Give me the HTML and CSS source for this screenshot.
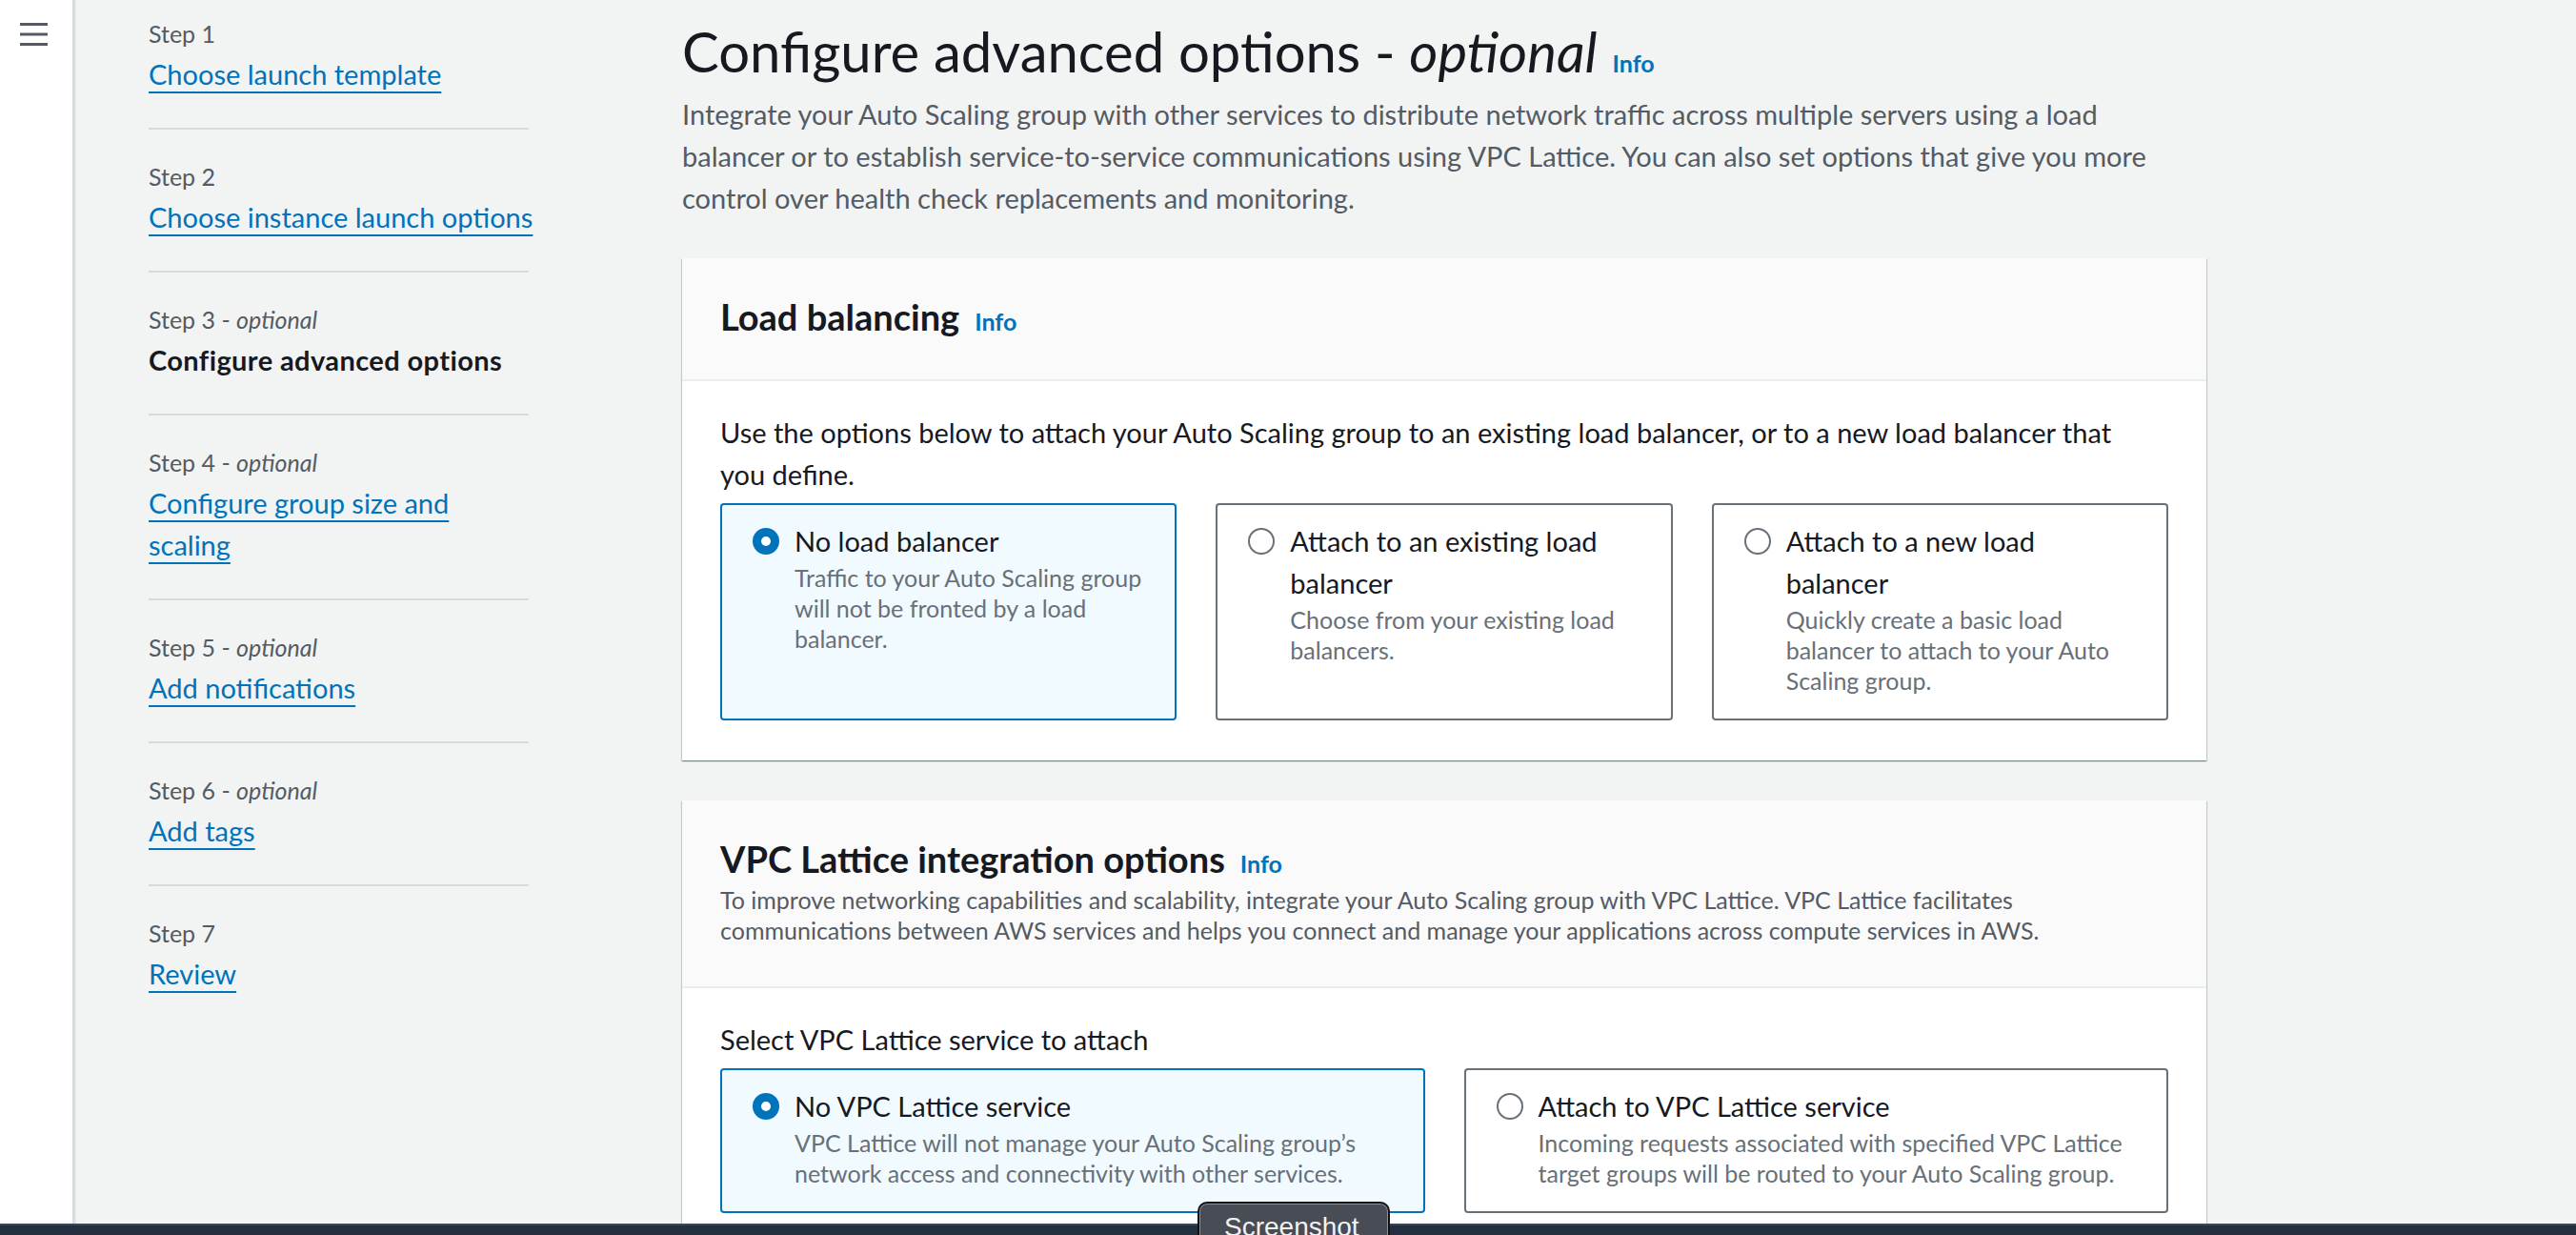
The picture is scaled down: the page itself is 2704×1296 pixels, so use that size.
FILE: index.html
```html
<!DOCTYPE html>
<html lang="en">
<head>
<meta charset="utf-8">
<title>Configure advanced options</title>
<link rel="stylesheet" href="styles.css">
</head>
<body>
<div class="app">
  <aside class="rail">
    <button class="menu-btn" aria-label="Open navigation">
      <svg width="30" height="26" viewBox="0 0 30 26" aria-hidden="true">
        <rect x="0" y="2" width="29" height="3"></rect>
        <rect x="0" y="12.5" width="29" height="3"></rect>
        <rect x="0" y="23" width="29" height="3"></rect>
      </svg>
    </button>
  </aside>

  <nav class="steps">
    <ol>
      <li class="step"><span class="step-label">Step 1</span><a class="step-link" href="#">Choose launch template</a></li>
      <li class="step"><span class="step-label">Step 2</span><a class="step-link" href="#">Choose instance launch options</a></li>
      <li class="step"><span class="step-label">Step 3 - <i>optional</i></span><span class="step-current">Configure advanced options</span></li>
      <li class="step"><span class="step-label">Step 4 - <i>optional</i></span><a class="step-link" href="#">Configure group size and<br>scaling</a></li>
      <li class="step"><span class="step-label">Step 5 - <i>optional</i></span><a class="step-link" href="#">Add notifications</a></li>
      <li class="step"><span class="step-label">Step 6 - <i>optional</i></span><a class="step-link" href="#">Add tags</a></li>
      <li class="step"><span class="step-label">Step 7</span><a class="step-link" href="#">Review</a></li>
    </ol>
  </nav>

  <main class="main">
    <header class="page-header">
      <h1>Configure advanced options - <i>optional</i><a class="info info-h1" href="#">Info</a></h1>
      <p class="page-desc">Integrate your Auto Scaling group with other services to distribute network traffic across multiple servers using a load<br>balancer or to establish service-to-service communications using VPC Lattice. You can also set options that give you more<br>control over health check replacements and monitoring.</p>
    </header>

    <section class="container">
      <div class="container-header">
        <h2>Load balancing<a class="info" href="#">Info</a></h2>
      </div>
      <div class="container-body">
        <p class="field-label">Use the options below to attach your Auto Scaling group to an existing load balancer, or to a new load balancer that<br>you define.</p>
        <div class="tiles tiles-3">
          <div class="tile selected">
            <span class="radio checked"></span>
            <span class="tile-text">
              <span class="tile-label">No load balancer</span>
              <span class="tile-desc">Traffic to your Auto Scaling group<br>will not be fronted by a load<br>balancer.</span>
            </span>
          </div>
          <div class="tile">
            <span class="radio"></span>
            <span class="tile-text">
              <span class="tile-label">Attach to an existing load<br>balancer</span>
              <span class="tile-desc">Choose from your existing load<br>balancers.</span>
            </span>
          </div>
          <div class="tile">
            <span class="radio"></span>
            <span class="tile-text">
              <span class="tile-label">Attach to a new load<br>balancer</span>
              <span class="tile-desc">Quickly create a basic load<br>balancer to attach to your Auto<br>Scaling group.</span>
            </span>
          </div>
        </div>
      </div>
    </section>

    <section class="container container-second">
      <div class="container-header">
        <h2>VPC Lattice integration options<a class="info" href="#">Info</a></h2>
        <p class="container-desc">To improve networking capabilities and scalability, integrate your Auto Scaling group with VPC Lattice. VPC Lattice facilitates<br>communications between AWS services and helps you connect and manage your applications across compute services in AWS.</p>
      </div>
      <div class="container-body">
        <p class="field-label">Select VPC Lattice service to attach</p>
        <div class="tiles tiles-2">
          <div class="tile selected">
            <span class="radio checked"></span>
            <span class="tile-text">
              <span class="tile-label">No VPC Lattice service</span>
              <span class="tile-desc">VPC Lattice will not manage your Auto Scaling group’s<br>network access and connectivity with other services.</span>
            </span>
          </div>
          <div class="tile">
            <span class="radio"></span>
            <span class="tile-text">
              <span class="tile-label">Attach to VPC Lattice service</span>
              <span class="tile-desc">Incoming requests associated with specified VPC Lattice<br>target groups will be routed to your Auto Scaling group.</span>
            </span>
          </div>
        </div>
      </div>
    </section>
  </main>
</div>

<div class="footer-bar"></div>
<div class="shot-tab">Screenshot</div>
</body>
</html>
```

FILE: styles.css
```css
* { box-sizing: border-box; }

html, body {
  margin: 0;
  height: 100%;
}

body {
  background: #f2f3f3;
  font-family: Lato, "Open Sans", sans-serif;
  color: #16191f;
  overflow: hidden;
}

.app {
  display: flex;
  align-items: flex-start;
  height: 1296px;
}

/* left rail */
.rail {
  flex: none;
  width: 78px;
  align-self: stretch;
  background: #ffffff;
  border-right: 2px solid #d5dbdb;
  box-shadow: 1px 0 2px rgba(0, 28, 36, 0.12);
  padding: 22px 0 0 21px;
}

.menu-btn {
  display: block;
  border: 0;
  background: none;
  padding: 0;
  width: 30px;
  height: 26px;
  fill: #545b64;
}

/* wizard steps */
.steps {
  flex: none;
  width: 399px;
  margin-left: 78px;
  padding-top: 19px;
}

.steps ol {
  list-style: none;
  margin: 0;
  padding: 0;
}

.step {
  padding-bottom: 34px;
  margin-bottom: 33px;
  border-bottom: 2px solid #d5dbdb;
}

.step:last-child {
  border-bottom: 0;
}

.step-label {
  display: block;
  font-size: 25px;
  line-height: 32px;
  color: #545b64;
  margin-bottom: 5px;
}

.step-link,
.step-current {
  font-size: 29px;
  line-height: 44px;
  white-space: nowrap;
}

.step-link {
  color: #0073bb;
  text-decoration: underline;
  text-decoration-thickness: 2px;
  text-underline-offset: 7px;
}

.step-current {
  display: block;
  font-weight: 700;
  letter-spacing: 0.4px;
  color: #16191f;
}

/* main column */
.main {
  flex: none;
  width: 1600px;
  margin-left: 161px;
}

h1 {
  margin: 0;
  padding-top: 18px;
  font-size: 58px;
  line-height: 72px;
  font-weight: 400;
  color: #16191f;
}

.info {
  font-size: 25px;
  line-height: 1;
  font-weight: 700;
  color: #0073bb;
  text-decoration: none;
  margin-left: 16px;
}

.page-desc {
  margin: 8px 0 0;
  font-size: 29px;
  line-height: 44px;
  color: #545b64;
}

.container {
  margin-top: 41px;
  background: #ffffff;
  box-shadow: 0 1px 1px 0 rgba(0, 28, 36, 0.3),
              1px 1px 1px 0 rgba(0, 28, 36, 0.15),
              -1px 1px 1px 0 rgba(0, 28, 36, 0.15);
}

.container-second {
  margin-top: 42px;
}

.container-header {
  background: #fafafa;
  border-bottom: 2px solid #eaeded;
  padding: 38px 40px 43px;
}

h2 {
  margin: 0;
  font-size: 38px;
  line-height: 46px;
  font-weight: 700;
}

.container-desc {
  margin: 4px 0 0;
  font-size: 25px;
  line-height: 32px;
  color: #545b64;
}

.container-body {
  padding: 32px 40px 42px;
}

.field-label {
  margin: 0 0 8px;
  font-size: 29px;
  line-height: 44px;
}

.tiles {
  display: grid;
  gap: 41px;
}

.tiles-3 { grid-template-columns: repeat(3, 1fr); }
.tiles-2 { grid-template-columns: repeat(2, 1fr); }

.tile {
  display: flex;
  gap: 16px;
  border: 2px solid #687078;
  border-radius: 4px;
  padding: 16px 20px 24px 32px;
  background: #ffffff;
}

.tile.selected {
  border-color: #0073bb;
  background: #f1faff;
}

.radio {
  flex: none;
  width: 28px;
  height: 28px;
  margin-top: 8px;
  border-radius: 50%;
  border: 2px solid #687078;
  background: #ffffff;
}

.radio.checked {
  border: 9px solid #0073bb;
}

.tile-label {
  display: block;
  font-size: 29px;
  line-height: 44px;
}

.tile-desc {
  display: block;
  font-size: 25px;
  line-height: 32px;
  color: #687078;
}

/* overlays at the bottom of the window */
.footer-bar {
  position: fixed;
  left: 0;
  right: 0;
  bottom: 0;
  height: 12px;
  background: #232f3e;
  border-top: 2px solid #3b4656;
}

.shot-tab {
  position: fixed;
  left: 1257px;
  top: 1261px;
  width: 202px;
  height: 50px;
  padding: 8px 0 0 26px;
  background: #474c55;
  border: 2px solid #111214;
  border-radius: 10px 10px 0 0;
  box-shadow: inset 0 0 0 1px #8b8f96;
  font-family: "Liberation Sans", Arial, sans-serif;
  font-size: 28px;
  line-height: 34px;
  color: #f2f2f2;
}
```
